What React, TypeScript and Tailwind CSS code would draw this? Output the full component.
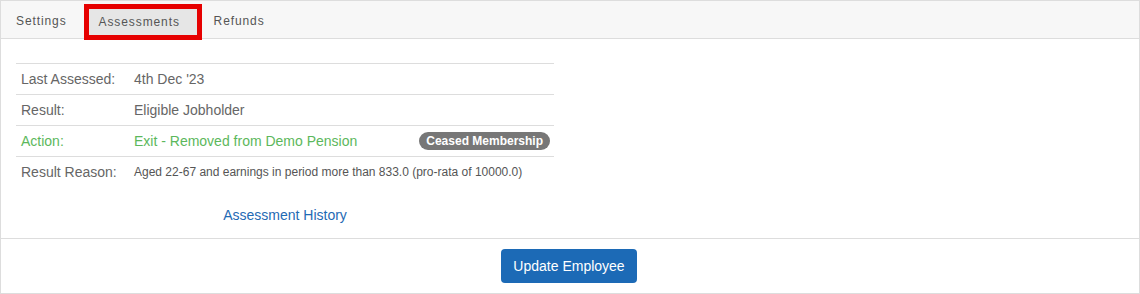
const rows = [
  { label: "Last Assessed:", value: "4th Dec '23" },
  { label: "Result:", value: "Eligible Jobholder" },
  { label: "Action:", value: "Exit - Removed from Demo Pension", green: true, badge: "Ceased Membership" },
  { label: "Result Reason:", value: "Aged 22-67 and earnings in period more than 833.0 (pro-rata of 10000.0)", small: true },
];

export default function App() {
  return (
    <div className="w-[1140px] h-[294px] bg-white font-['Liberation_Sans',Arial,sans-serif] text-[#666]">
      <div className="h-[294px] border border-[#ddd] flex flex-col">
        {/* tabs */}
        <div className="h-[38px] bg-[#f7f7f7] border-b border-[#ddd] flex items-start text-[12px] tracking-[0.9px] text-[#555]">
          <div className="pl-[15px] pr-[17px] pt-[2px] h-[37px] flex items-center">Settings</div>
          <div className="mt-[3px] w-[118px] h-[36px] border-[5px] border-[#e60000] bg-[#e6e6e6] flex items-center pl-[10px] relative">
            Assessments
          </div>
          <div className="px-[12px] pt-[2px] h-[37px] flex items-center">Refunds</div>
        </div>

        {/* body */}
        <div className="flex-1 px-[15px] pt-[24px]">
          <div className="w-[538px]">
            <table className="w-full border-collapse text-[14px]">
              <tbody>
                {rows.map((r) => (
                  <tr key={r.label} className="border-t border-[#ddd] h-[31px]">
                    <td className={`w-[118px] pl-[5px] align-middle ${r.green ? "text-[#5cb85c]" : "text-[#666]"}`}>
                      {r.label}
                    </td>
                    <td className="pr-[4px] align-middle">
                      <div className="flex items-center justify-between">
                        <span
                          className={
                            r.small
                              ? "text-[12px] text-[#555]"
                              : r.green
                              ? "text-[#5cb85c]"
                              : "text-[#666]"
                          }
                        >
                          {r.value}
                        </span>
                        {r.badge && (
                          <span className="bg-[#777] text-white text-[12px] font-bold rounded-full px-[7px] leading-[18px]">
                            {r.badge}
                          </span>
                        )}
                      </div>
                    </td>
                  </tr>
                ))}
              </tbody>
            </table>
            <div className="text-center mt-[17px] text-[14px] text-[#1f6ab4]">Assessment History</div>
          </div>
        </div>

        {/* footer */}
        <div className="h-[55px] border-t border-[#ddd] flex justify-center pt-[10px] pr-[2px]">
          <button className="w-[136px] h-[34px] bg-[#1c6ab6] text-white text-[14px] rounded-[4px]">
            Update Employee
          </button>
        </div>
      </div>
    </div>
  );
}
